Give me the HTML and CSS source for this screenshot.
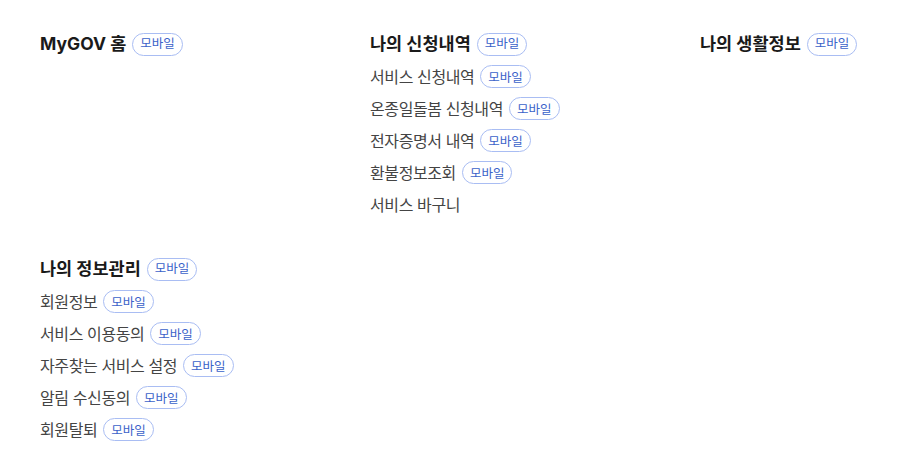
FILE: index.html
```html
<!DOCTYPE html>
<html lang="ko">
<head>
    <meta charset="UTF-8">
    <meta name="viewport" content="width=device-width, initial-scale=1.0">
    <title>마이페이지 메뉴</title>
    <link rel="stylesheet" href="styles.css">
</head>
<body>
    <div class="menu-grid">
        <div class="menu-group">
            <h3 class="menu-title">MyGOV 홈 <span class="badge">모바일</span></h3>
        </div>

        <div class="menu-group">
            <h3 class="menu-title">나의 신청내역 <span class="badge">모바일</span></h3>
            <ul class="menu-list">
                <li><a href="#">서비스 신청내역</a> <span class="badge">모바일</span></li>
                <li><a href="#">온종일돌봄 신청내역</a> <span class="badge">모바일</span></li>
                <li><a href="#">전자증명서 내역</a> <span class="badge">모바일</span></li>
                <li><a href="#">환불정보조회</a> <span class="badge">모바일</span></li>
                <li><a href="#">서비스 바구니</a></li>
            </ul>
        </div>

        <div class="menu-group">
            <h3 class="menu-title">나의 생활정보 <span class="badge">모바일</span></h3>
        </div>

        <div class="menu-group">
            <h3 class="menu-title">나의 정보관리 <span class="badge">모바일</span></h3>
            <ul class="menu-list">
                <li><a href="#">회원정보</a> <span class="badge">모바일</span></li>
                <li><a href="#">서비스 이용동의</a> <span class="badge">모바일</span></li>
                <li><a href="#">자주찾는 서비스 설정</a> <span class="badge">모바일</span></li>
                <li><a href="#">알림 수신동의</a> <span class="badge">모바일</span></li>
                <li><a href="#">회원탈퇴</a> <span class="badge">모바일</span></li>
            </ul>
        </div>
    </div>
</body>
</html>
```
FILE: styles.css
```css
body {
    margin: 0;
    font-family: Inter, "Noto Sans CJK KR", "Noto Sans", sans-serif;
    color: #333;
    background: #fff;
}
.menu-grid {
    display: grid;
    grid-template-columns: 330px 330px 1fr;
    row-gap: 33px;
    padding: 28px 40px;
}
.menu-title {
    margin: 0;
    font-size: 17.5px;
    font-weight: 700;
    color: #1a1a1a;
    line-height: 32px;
    display: flex;
    align-items: center;
    gap: 6px;
}
.menu-list {
    list-style: none;
    margin: 0;
    padding: 0;
}
.menu-list li {
    display: flex;
    align-items: center;
    gap: 6px;
    height: 32px;
    font-size: 16px;
}
.menu-list a {
    color: #444;
    text-decoration: none;
    letter-spacing: -0.4px;
}
.badge {
    display: inline-flex;
    align-items: center;
    height: 23px;
    padding: 0 7px;
    border: 1px solid #a9bdf3;
    border-radius: 12px;
    font-size: 12.5px;
    font-weight: 400;
    color: #3b62c9;
    box-sizing: border-box;
}
```
